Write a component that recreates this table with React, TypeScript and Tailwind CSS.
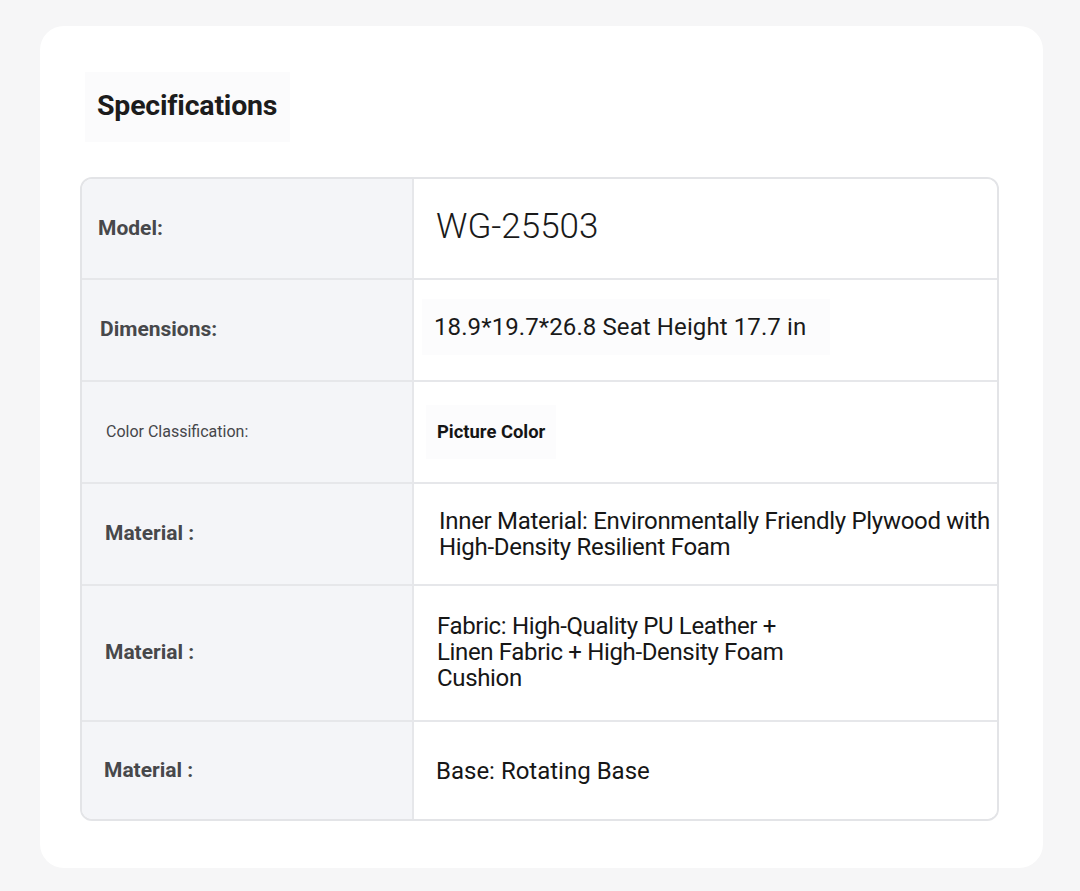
import React from "react";

const font = { fontFamily: "Roboto, 'Noto Sans', Arial, sans-serif" };

function Row({
  label,
  value,
  h,
  last,
}: {
  label: React.ReactNode;
  value: React.ReactNode;
  h: string;
  last?: boolean;
}) {
  return (
    <div className={`flex ${h} ${last ? "" : "border-b-2 border-[#e6e7ea]"}`}>
      <div className="w-[332px] shrink-0 bg-[#f4f5f8] border-r-2 border-[#e6e7ea] flex items-center">
        {label}
      </div>
      <div className="flex-1 bg-white flex items-center">{value}</div>
    </div>
  );
}

export default function App() {
  return (
    <div className="min-h-[891px] w-[1080px] bg-[#f6f6f7] pt-[26px] pl-[40px]" style={font}>
      <div className="w-[1003px] h-[842px] bg-white rounded-[24px] pl-[40px] pt-[46px]">
        <div className="ml-[5px] w-[205px] h-[70px] bg-[#fbfbfc] flex items-center pl-[12px]">
          <h1 className="text-[28.5px] font-bold text-[#1c1c1c] tracking-[-0.2px] -mt-[2px]">Specifications</h1>
        </div>
        <div className="mt-[35px] w-[919px] border-2 border-[#e3e4e7] rounded-[12px] overflow-hidden">
          <Row
            h="h-[101px]"
            label={<span className="ml-[16px] text-[21px] font-bold text-[#47484b]">Model:</span>}
            value={<span className="ml-[22px] text-[35px] font-light text-[#1a1a1a] -mt-[2px]">WG-25503</span>}
          />
          <Row
            h="h-[102px]"
            label={<span className="ml-[18px] text-[21px] font-bold text-[#47484b]">Dimensions:</span>}
            value={
              <span className="ml-[8px] -mt-[6px] px-[12px] py-[10px] bg-[#fcfcfd] text-[24px] text-[#1a1a1a] pr-[24px] tracking-[0.1px]">
                18.9*19.7*26.8 Seat Height 17.7 in
              </span>
            }
          />
          <Row
            h="h-[102px]"
            label={<span className="ml-[24px] text-[16px] text-[#45464a]">Color Classification:</span>}
            value={
              <span className="ml-[12px] px-[11px] py-[13px] bg-[#fcfcfd] text-[18.4px] font-bold text-[#151515]">
                Picture Color
              </span>
            }
          />
          <Row
            h="h-[102px]"
            label={<span className="ml-[23px] text-[21px] font-bold text-[#47484b]">Material :</span>}
            value={
              <div className="ml-[25px] text-[24px] leading-[26px] text-[#161616] tracking-[-0.3px]">
                Inner Material: Environmentally Friendly Plywood with
                <br />
                High-Density Resilient Foam
              </div>
            }
          />
          <Row
            h="h-[136px]"
            label={<span className="ml-[23px] text-[21px] font-bold text-[#47484b]">Material :</span>}
            value={
              <div className="ml-[23px] text-[24px] leading-[26px] text-[#161616] tracking-[-0.35px] -mt-[2px]">
                Fabric: High-Quality PU Leather +
                <br />
                Linen Fabric + High-Density Foam
                <br />
                Cushion
              </div>
            }
          />
          <Row
            h="h-[97px]"
            last
            label={<span className="ml-[22px] text-[21px] font-bold text-[#47484b]">Material :</span>}
            value={
              <span className="ml-[22px] text-[24px] text-[#161616]">Base: Rotating Base</span>
            }
          />
        </div>
      </div>
    </div>
  );
}
